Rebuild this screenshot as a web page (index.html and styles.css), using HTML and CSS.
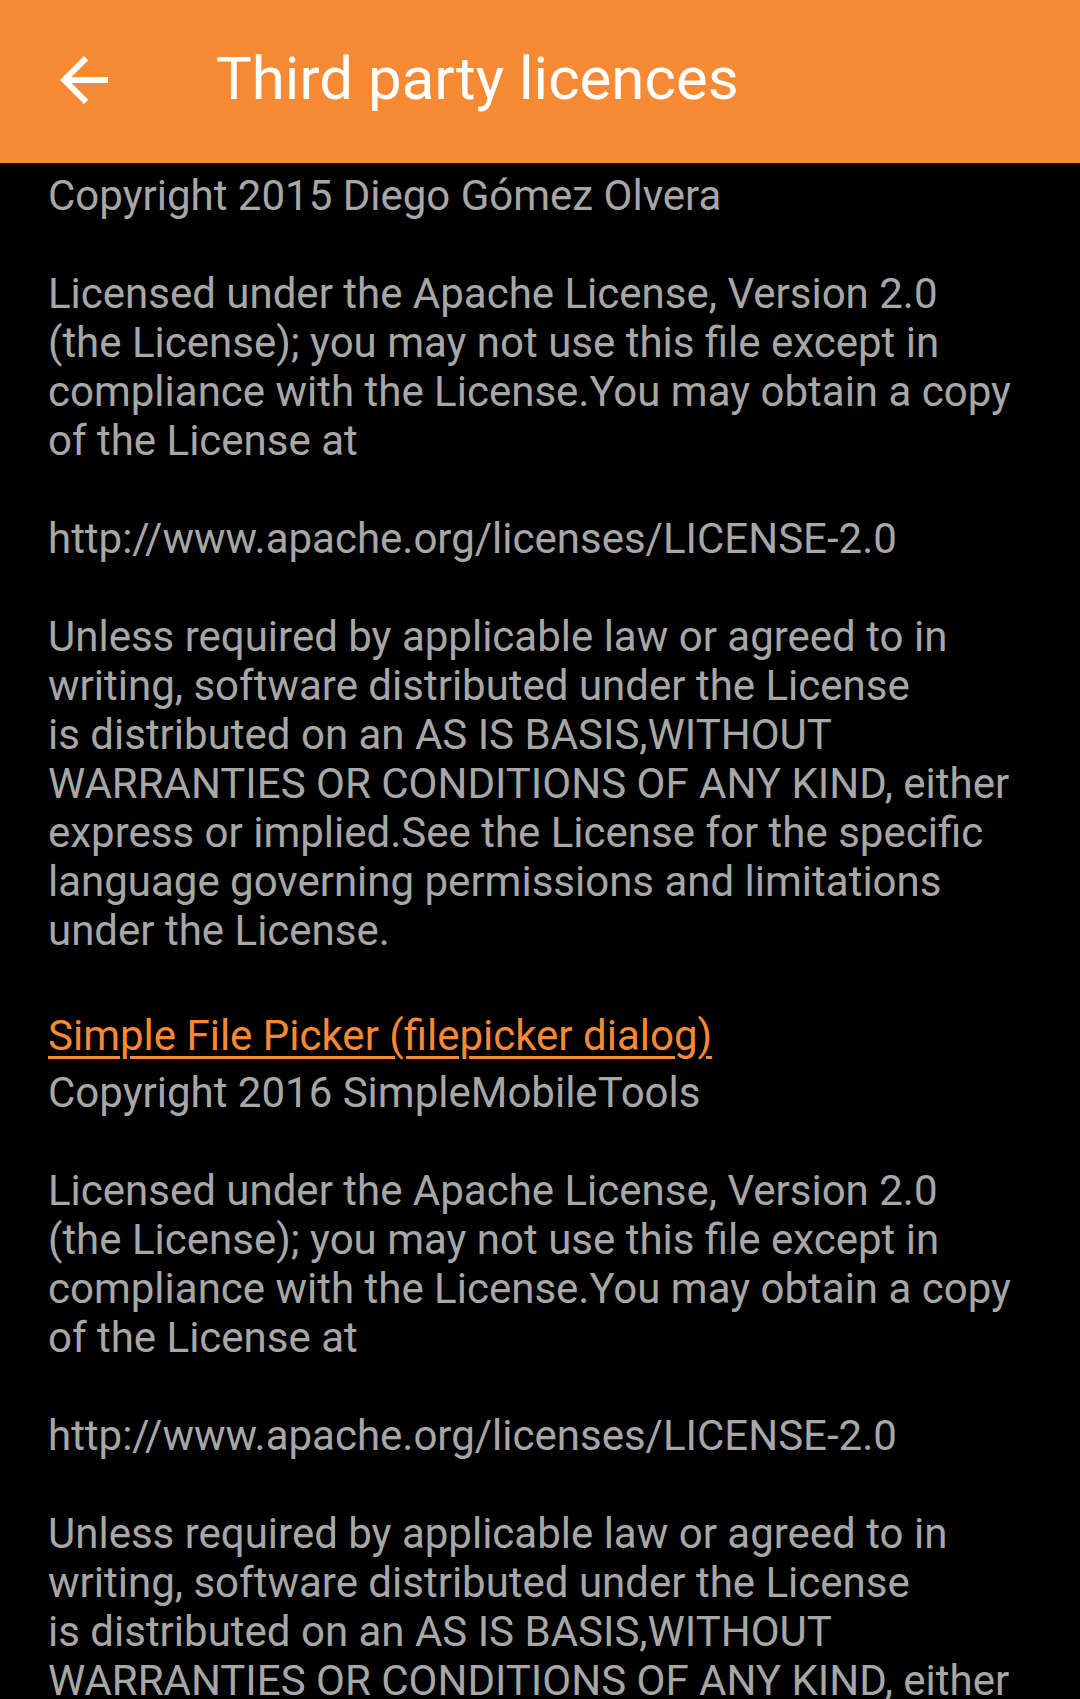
FILE: index.html
```html
<!DOCTYPE html>
<html>
<head>
<meta charset="utf-8">
<link rel="stylesheet" href="styles.css">
</head>
<body>
<header class="toolbar">
  <div class="back">
    <svg viewBox="0 0 24 24" width="72" height="72"><path fill="#fff" d="M20 11H7.83l5.59-5.59L12 4l-8 8 8 8 1.41-1.41L7.83 13H20v-2z"/></svg>
  </div>
  <h1 class="title">Third party licences</h1>
</header>
<main class="content">
  <section class="item first">
    <p class="text">Copyright 2015 Diego Gómez Olvera</p>
    <p class="text">Licensed under the Apache License, Version 2.0<br>(the License); you may not use this file except in<br>compliance with the License.You may obtain a copy<br>of the License at</p>
    <p class="text">http://www.apache.org/licenses/LICENSE-2.0</p>
    <p class="text">Unless required by applicable law or agreed to in<br>writing, software distributed under the License<br>is distributed on an AS IS BASIS,WITHOUT<br>WARRANTIES OR CONDITIONS OF ANY KIND, either<br>express or implied.See the License for the specific<br>language governing permissions and limitations<br>under the License.</p>
  </section>
  <section class="item">
    <a class="link">Simple File Picker (filepicker dialog)</a>
    <p class="text">Copyright 2016 SimpleMobileTools</p>
    <p class="text">Licensed under the Apache License, Version 2.0<br>(the License); you may not use this file except in<br>compliance with the License.You may obtain a copy<br>of the License at</p>
    <p class="text">http://www.apache.org/licenses/LICENSE-2.0</p>
    <p class="text">Unless required by applicable law or agreed to in<br>writing, software distributed under the License<br>is distributed on an AS IS BASIS,WITHOUT<br>WARRANTIES OR CONDITIONS OF ANY KIND, either<br>express or implied.See the License for the specific<br>language governing permissions and limitations<br>under the License.</p>
  </section>
</main>
</body>
</html>
```
FILE: styles.css
```css
html, body {
  margin: 0;
  padding: 0;
  background: #000;
  height: 1699px;
  overflow: hidden;
}
body {
  font-family: Roboto, "Noto Sans", sans-serif;
}
.toolbar {
  height: 163px;
  background: #f68933;
  display: flex;
  align-items: center;
}
.back {
  width: 72px;
  height: 72px;
  margin-left: 48px;
  margin-top: -4px;
  display: flex;
}
.title {
  margin: 0 0 0 96px;
  margin-top: -6px;
  font-weight: 400;
  font-size: 60px;
  color: #fff;
  line-height: 70px;
}
.content {
  padding: 8px 48px 0 48px;
}
.item {
  display: flex;
  flex-direction: column;
  gap: 49px;
  margin-top: 56px;
}
.item.first {
  margin-top: 0;
}
.text {
  margin: 0;
  font-size: 42px;
  line-height: 49px;
  color: #a7a7a7;
  white-space: nowrap;
}
.link {
  font-size: 42px;
  line-height: 49px;
  color: #f68933;
  text-decoration: underline;
  text-decoration-thickness: 3px;
  text-underline-offset: 6px;
  margin-bottom: -41px;
  align-self: flex-start;
}
```
